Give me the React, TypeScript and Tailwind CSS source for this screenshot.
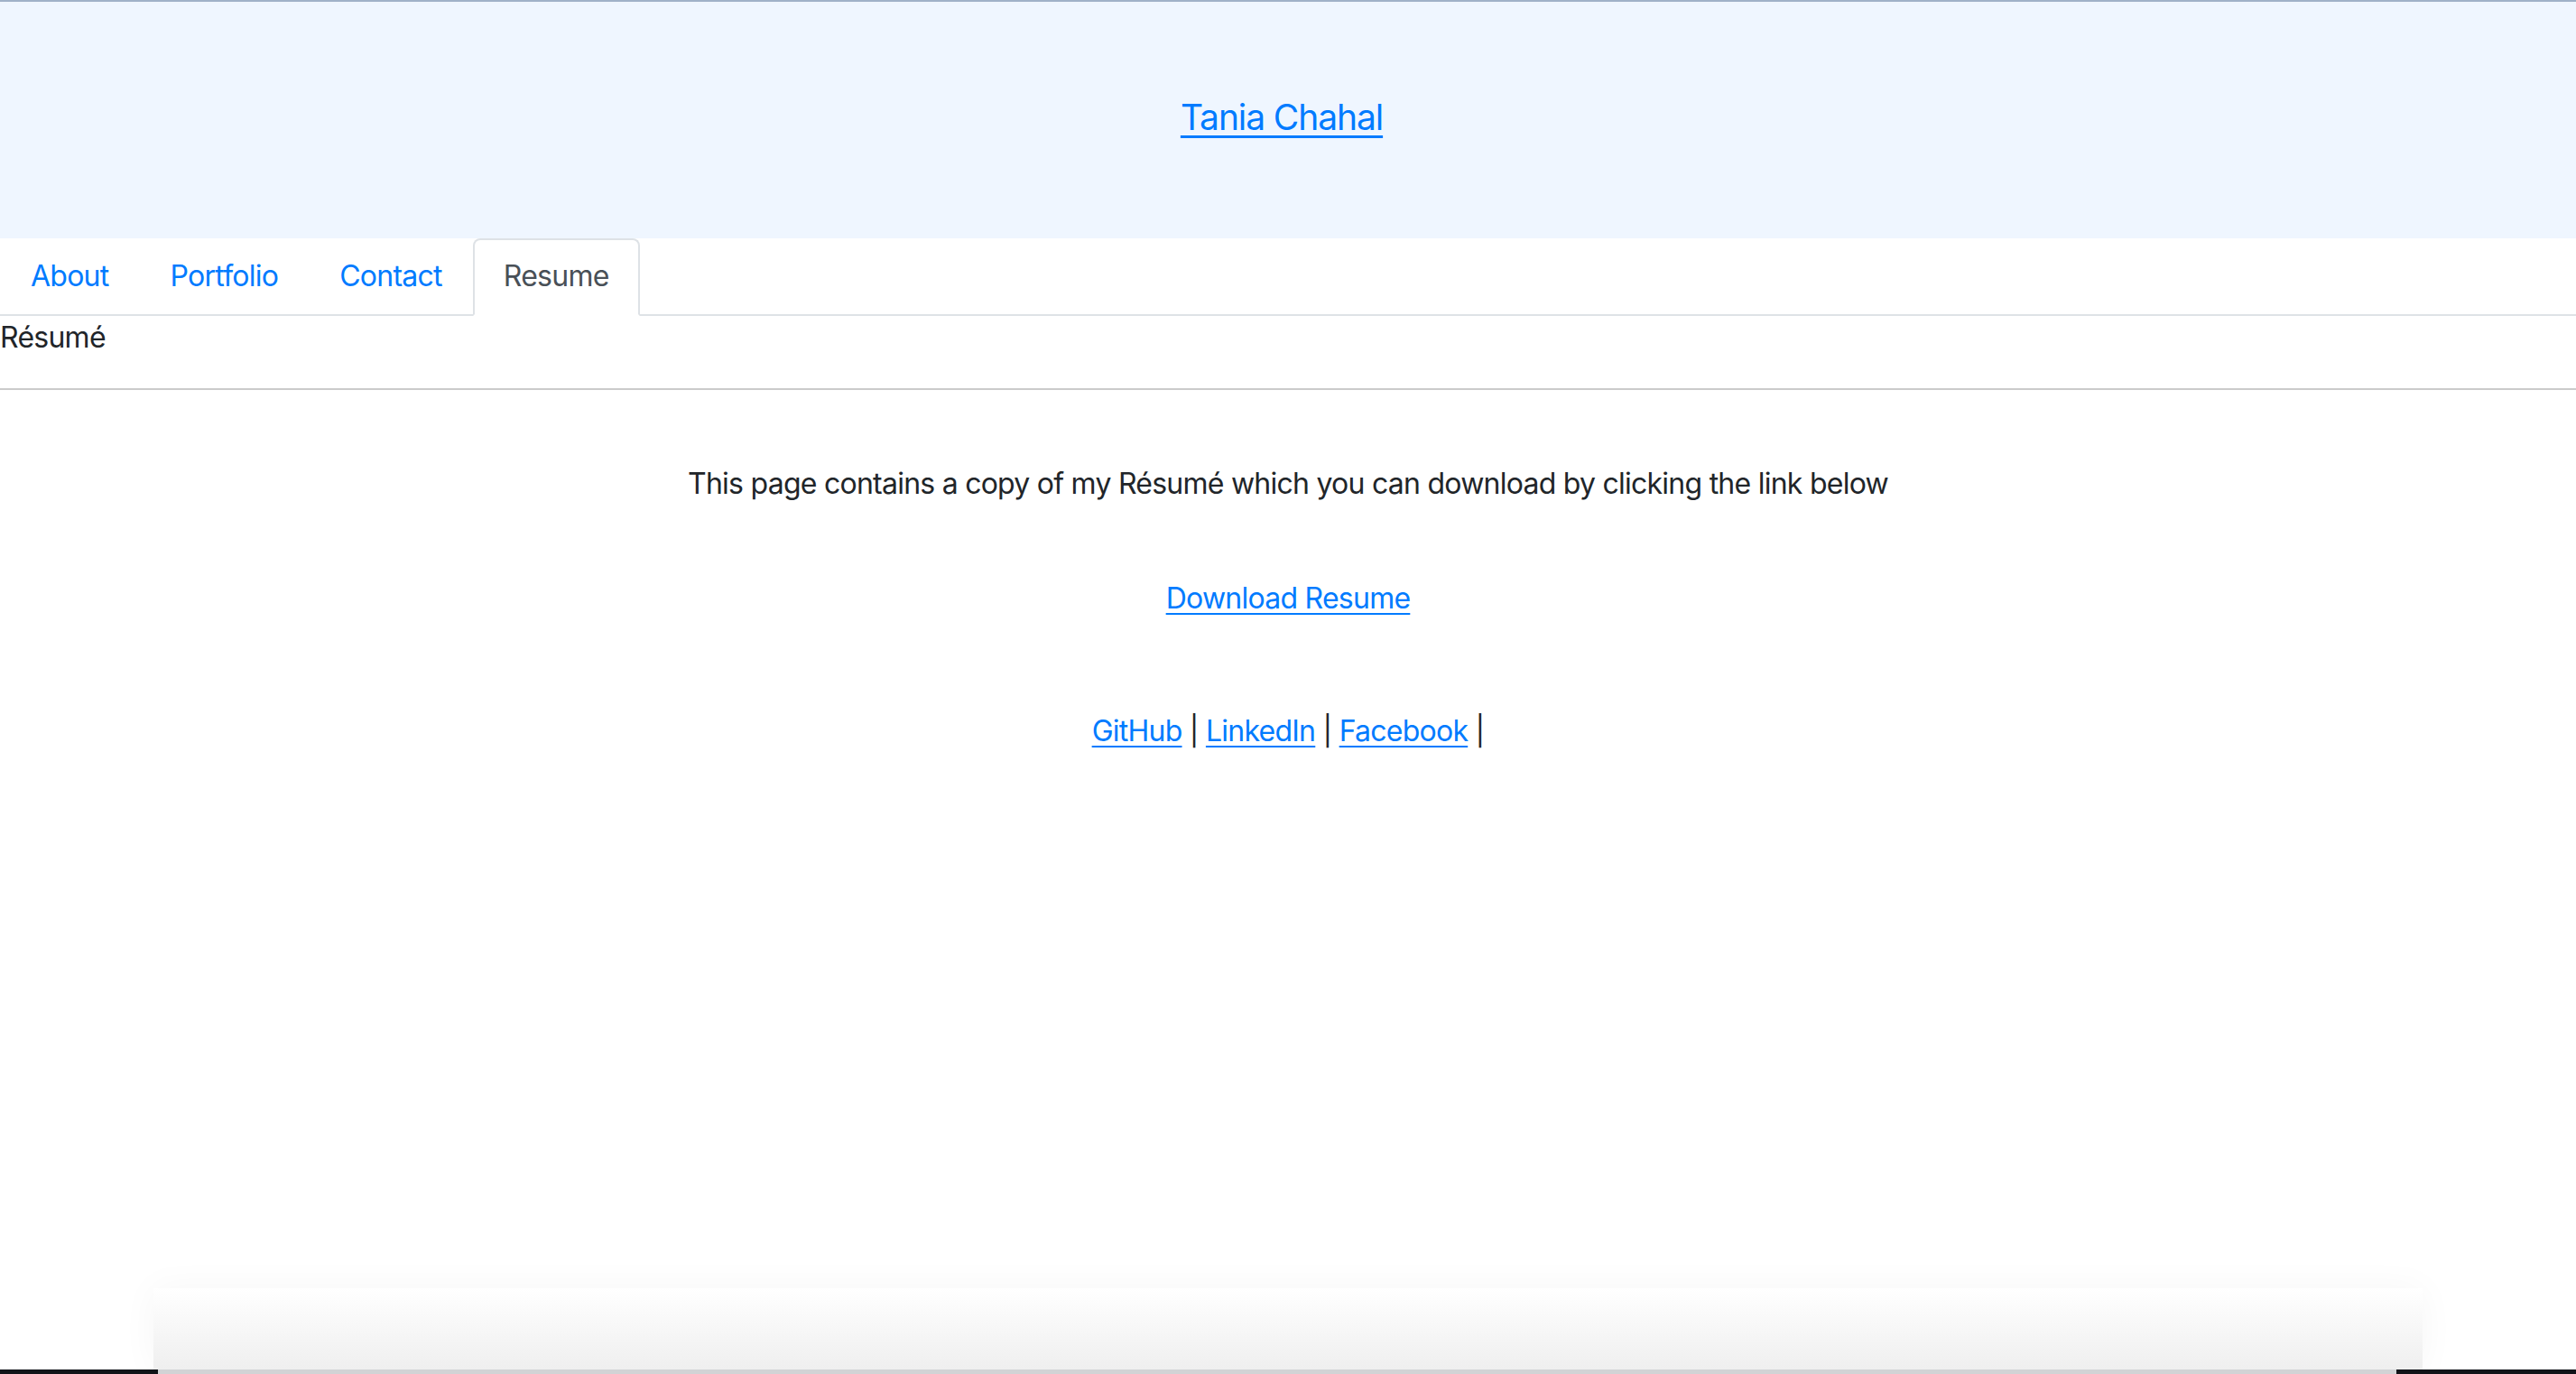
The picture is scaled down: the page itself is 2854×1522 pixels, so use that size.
import React from 'react';

const tabs = ['About', 'Portfolio', 'Contact', 'Resume'];
const socials = ['GitHub', 'LinkedIn', 'Facebook'];

const App = () => {
  return (
    <div className="min-h-screen flex flex-col bg-white text-[#212529] font-['Inter','Liberation_Sans',sans-serif] text-[32px] leading-[48px] tracking-[-0.75px]">
      {/* Header */}
      <header className="h-[264px] bg-[#eff6ff] border-t-2 border-[#a0b1c8] flex items-center justify-center pb-[6px] pr-[14px]">
        <a href="#" className="text-[#007bff] text-[39px] tracking-[-1.1px] underline decoration-[3px] underline-offset-[6px]">
          Tania Chahal
        </a>
      </header>

      {/* Tabs */}
      <nav className="flex border-b-2 border-[#dee2e6]">
        {tabs.map((t) => (
          <a
            key={t}
            href="#"
            className={
              t === 'Resume'
                ? 'px-[32px] py-[16px] -mb-[2px] border-2 border-[#dee2e6] border-b-white rounded-t-[8px] bg-white text-[#495057]'
                : 'px-[32px] py-[16px] border-2 border-transparent text-[#007bff]'
            }
          >
            {t}
          </a>
        ))}
      </nav>

      <div className="flex-1 flex flex-col">
        <h2 className="text-[32px] leading-[48px]">Résumé</h2>
        <hr className="mt-[32px] border-t-2 border-[#cbcbcb]" />

        <section className="flex flex-col items-center text-center">
          <p className="mt-[80px]">
            This page contains a copy of my Résumé which you can download by clicking the link below
          </p>
          <a href="#" className="mt-[79px] text-[#007bff] underline decoration-2 underline-offset-[5px]">
            Download Resume
          </a>
          <p className="mt-[99px]">
            {socials.map((s) => (
              <React.Fragment key={s}>
                <a href="#" className="text-[#007bff] underline decoration-2 underline-offset-[5px]">
                  {s}
                </a>{' '}
                |{' '}
              </React.Fragment>
            ))}
          </p>
        </section>
      </div>

      {/* bottom shadow strip */}
      <div className="h-[90px] mx-[170px] bg-gradient-to-b from-white to-[#efefef] shadow-[0_0_40px_rgba(0,0,0,0.04)]" />
      <div className="h-[5px] bg-[#111318] flex">
        <div className="ml-[175px] mr-[199px] flex-1 bg-[#d2d3d5]" />
      </div>
    </div>
  );
};

export default App;
